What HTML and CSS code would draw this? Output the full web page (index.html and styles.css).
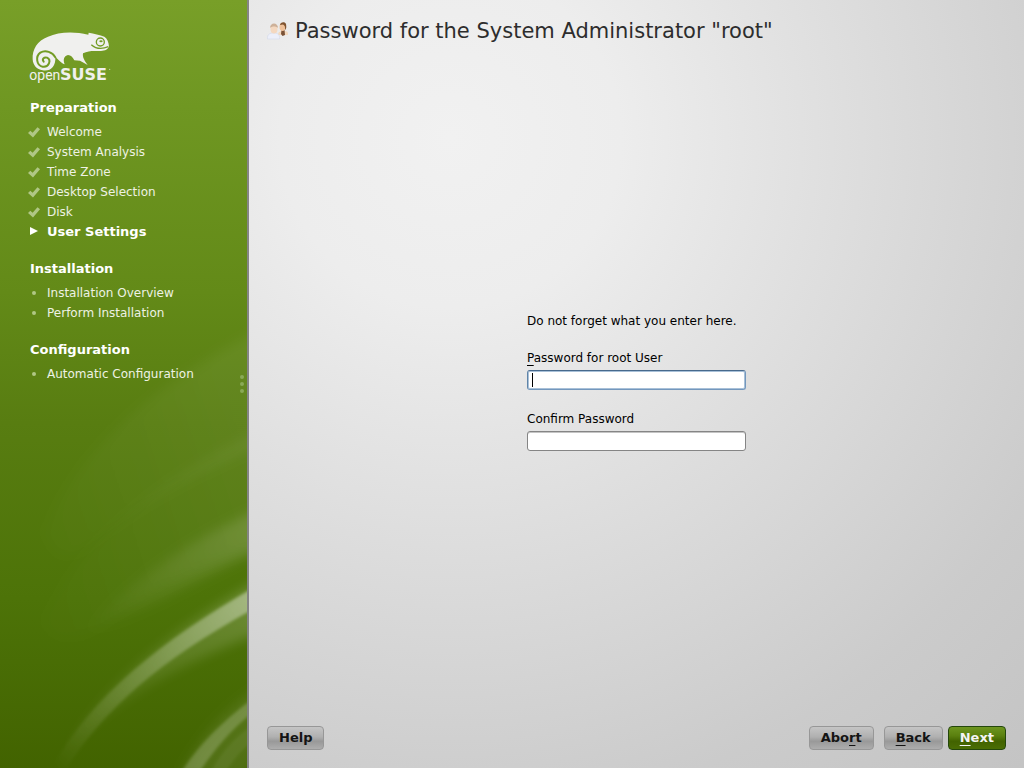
FILE: index.html
```html
<!DOCTYPE html>
<html lang="en">
<head>
    <meta charset="UTF-8">
    <meta name="viewport" content="width=device-width, initial-scale=1.0">
    <title>openSUSE Installation</title>
    <link rel="stylesheet" href="styles.css">
</head>
<body>
    <svg class="defs" aria-hidden="true">
        <symbol id="check" viewBox="0 0 12 12">
            <path d="M0 7 L2.300 4.800 L4.600 6.800 L9.500 1.200 L12 3.200 L5 11.500 Z"/>
        </symbol>
    </svg>
    <aside class="sidebar">
        <!-- Light streaks -->
        <svg class="streaks" viewBox="0 -300 741 1404" preserveAspectRatio="xMaxYMax slice" aria-hidden="true">
            <defs>
                <linearGradient id="fade" gradientUnits="userSpaceOnUse" x1="160" y1="1090" x2="741" y2="590">
                    <stop offset="0" stop-color="#fff" stop-opacity="0"/>
                    <stop offset="0.5" stop-color="#fff" stop-opacity="0.18"/>
                    <stop offset="1" stop-color="#fff" stop-opacity="0.38"/>
                </linearGradient>
                <linearGradient id="haze" gradientUnits="userSpaceOnUse" x1="120" y1="400" x2="741" y2="200">
                    <stop offset="0" stop-color="#fff" stop-opacity="0.01"/>
                    <stop offset="1" stop-color="#fff" stop-opacity="0.05"/>
                </linearGradient>
                <linearGradient id="band" gradientUnits="userSpaceOnUse" x1="230" y1="680" x2="741" y2="380">
                    <stop offset="0" stop-color="#fff" stop-opacity="0"/>
                    <stop offset="1" stop-color="#fff" stop-opacity="0.13"/>
                </linearGradient>
                <filter id="soft" x="-20%" y="-20%" width="140%" height="140%"><feGaussianBlur stdDeviation="5"/></filter>
                <filter id="softer" x="-20%" y="-20%" width="140%" height="140%"><feGaussianBlur stdDeviation="18"/></filter>
            </defs>
            <path fill="url(#haze)" filter="url(#softer)" d="M800 -220 C480 -60 230 150 130 400 C170 480 190 480 250 450 C400 330 560 230 800 130 Z"/>
            <path fill="url(#haze)" filter="url(#softer)" d="M800 80 C500 220 220 440 130 660 C150 720 200 740 300 680 C420 590 600 500 800 430 Z"/>
            <path fill="url(#band)" filter="url(#softer)" d="M800 320 C580 410 380 550 250 700 C400 660 600 530 800 440 Z"/>
            <path fill="url(#fade)" filter="url(#softer)" opacity="0.45" d="M800 530 C500 690 280 880 150 1110 C350 890 520 800 800 690 Z"/>
            <path fill="url(#fade)" filter="url(#soft)" d="M780 552 C500 710 280 880 155 1104 L200 1104 C320 920 480 780 780 616 Z"/>
            <path fill="#fff" fill-opacity="0.08" filter="url(#softer)" d="M800 850 C680 920 600 1010 540 1130 L740 1130 L800 1000 Z"/>
            <path fill="#fff" fill-opacity="0.19" filter="url(#soft)" d="M780 880 C670 960 600 1030 548 1110 L602 1110 C650 1040 700 980 780 920 Z"/>
            <path fill="#fff" fill-opacity="0.06" filter="url(#soft)" d="M780 965 C710 1000 670 1050 635 1110 L680 1110 C710 1070 730 1040 780 1010 Z"/>
        </svg>

        <svg class="logo" viewBox="27 33 246 162" role="img" aria-label="openSUSE">
            <path fill="#f0f0ee" d="M38 118 C36 88 52 62 84 50 C115 36 160 33 205 44 L206 38 C222 40 240 45 253 50 C261 55 266 66 267 79 C264 88 254 94 240 93 C222 93 205 91 189 100 C187 111 193 122 203 135 L180 122 L163 121 C158 112 153 105 144 105 C133 107 128 118 134 133 C121 129 114 116 106 111 C108 140 91 155 68 151 C50 148 39 136 38 118 Z"/>
            <path fill="none" stroke="#739c24" stroke-width="6" stroke-linecap="round" d="M106 112 C98 96 76 89 61 98 C46 109 49 136 68 140 C87 143 95 120 81 113 C72 110 65 118 71 125"/>
            <circle cx="241" cy="66" r="12" fill="none" stroke="#739c24" stroke-width="4"/>
            <ellipse cx="243" cy="64" rx="5" ry="3" fill="#739c24"/>
            <path fill="none" stroke="#739c24" stroke-width="4" d="M214 74 C226 85 244 89 265 80"/>
            <text class="logo-open" x="28" y="181">open</text>
            <text class="logo-suse" x="120" y="181">SUSE</text>
            <circle cx="269" cy="148" r="2" fill="#c9d8a8"/>
        </svg>

        <nav class="steps">
            <h2>Preparation</h2>
            <ul>
                <li><svg class="mark"><use href="#check"/></svg>Welcome</li>
                <li><svg class="mark"><use href="#check"/></svg>System Analysis</li>
                <li><svg class="mark"><use href="#check"/></svg>Time Zone</li>
                <li><svg class="mark"><use href="#check"/></svg>Desktop Selection</li>
                <li><svg class="mark"><use href="#check"/></svg>Disk</li>
                <li class="current"><svg class="mark" viewBox="0 0 12 12"><path d="M2 1 L10 5 L2 9 Z"/></svg>User Settings</li>
            </ul>
            <h2>Installation</h2>
            <ul>
                <li><svg class="mark" viewBox="0 0 12 12"><circle cx="6" cy="6" r="2"/></svg>Installation Overview</li>
                <li><svg class="mark" viewBox="0 0 12 12"><circle cx="6" cy="6" r="2"/></svg>Perform Installation</li>
            </ul>
            <h2>Configuration</h2>
            <ul>
                <li><svg class="mark" viewBox="0 0 12 12"><circle cx="6" cy="6" r="2"/></svg>Automatic Configuration</li>
            </ul>
        </nav>
        <div class="grip"><i></i><i></i><i></i></div>
    </aside>

    <form class="main">
        <header class="title">
            <svg class="users" viewBox="0 0 22 20" aria-hidden="true">
                <path fill="#f3d9bf" d="M11 13 C12 9 20 9 21 12 V14 H11 Z"/>
                <path fill="#7a5236" d="M14.500 9 L17.500 9 L18 14 L15.500 15 L14 13 Z"/>
                <ellipse cx="15.500" cy="6" rx="3" ry="4" fill="#efc199"/>
                <path fill="#80542f" d="M13 4 C13 1 18 0 19 3 C19.500 6 19.500 8 18 9 C18.500 6 17.500 4 16 3.500 Z"/>
                <path fill="#eceffa" stroke="#d3d9e9" stroke-width="0.600" d="M0.500 18 C0 13 3 12 7 12 C11 12 13 14 12.500 18 Z"/>
                <ellipse cx="7" cy="8" rx="3.500" ry="4.500" fill="#f4d8c0"/>
                <path fill="#cdb199" d="M3 7 C3 1 11 1 11 7 C9 5 5 5 3 7 Z"/>
            </svg>
            <h1>Password for the System Administrator "root"</h1>
        </header>

        <div class="content">
            <div class="fields">
                <p>Do not forget what you enter here.</p>
                <label for="password"><u>P</u>assword for root User</label>
                <input type="password" id="password" class="active">
                <label for="confirm">Confirm Password</label>
                <input type="password" id="confirm">
            </div>
        </div>

        <footer class="buttons">
            <button type="button">Help</button>
            <button type="button" class="abort">Abo<u>r</u>t</button>
            <button type="button" class="back"><u>B</u>ack</button>
            <button type="submit" class="next"><u>N</u>ext</button>
        </footer>
    </form>
</body>
</html>
```

FILE: styles.css
```css
* {
    box-sizing: border-box;
}
body {
    margin: 0;
    min-height: 100vh;
    display: flex;
    font-family: "DejaVu Sans", Verdana, sans-serif;
    font-size: 12px;
    line-height: 20px;
    color: #000;
}
.defs {
    position: absolute;
    width: 0;
    height: 0;
}

/* Sidebar */
.sidebar {
    position: relative;
    flex: none;
    width: 249px;
    padding: 31px 0 0 29px;
    border-right: 2px solid #858585;
    background: linear-gradient(#789f28, #6f9722 14%, #638a18 38%, #587d11 55%, #4d7308 78%, #426300);
    color: #eef2e4;
}
.streaks {
    position: absolute;
    right: 0;
    bottom: 0;
    width: 247px;
    height: 468px;
}
.logo {
    position: relative;
    display: block;
    width: 82px;
    height: 54px;
}
.logo-open, .logo-suse {
    fill: #f0f0ee;
}
.logo-open {
    font-family: Roboto, sans-serif;
    font-size: 42px;
}
.logo-suse {
    font-family: "DejaVu Sans", sans-serif;
    font-size: 48px;
    font-weight: bold;
}
.steps {
    position: relative;
    padding-top: 13px;
}
.steps h2 {
    margin: 0 0 4px 1px;
    font-size: 13px;
    line-height: 20px;
    color: #fff;
}
.steps ul {
    margin: 0 0 17px;
    padding: 0;
    list-style: none;
}
.steps li {
    display: flex;
    align-items: center;
    gap: 7px;
}
.mark {
    width: 12px;
    height: 12px;
    margin-left: -1px;
    fill: #b0c785;
}
.current {
    font-size: 13px;
    font-weight: bold;
    color: #fff;
}
.current .mark {
    fill: #fff;
}
.grip {
    position: absolute;
    right: 3px;
    top: 50%;
    display: grid;
    gap: 3px;
    transform: translateY(-50%);
}
.grip i {
    width: 4px;
    height: 4px;
    border-radius: 50%;
    background: #8aa957;
}

/* Main area */
.main {
    flex: 1;
    display: flex;
    flex-direction: column;
    padding: 18px;
    background: radial-gradient(ellipse 110% 110% at 26% 18%, #f1f1f1, #ededed 20%, #dcdcdc 50%, #cbcbcb 80%, #c4c4c4);
}
.title {
    display: flex;
    align-items: center;
    gap: 6px;
}
.title h1 {
    margin: 0;
    font-size: 21px;
    font-weight: normal;
    line-height: 26px;
    color: #2d2d2d;
}
.users {
    width: 22px;
    height: 20px;
}
.content {
    flex: 1;
    display: flex;
    align-items: center;
    justify-content: center;
    padding-bottom: 8px;
}
.fields {
    display: flex;
    flex-direction: column;
    min-width: 219px;
}
.fields p {
    margin: 0 0 17px;
}
.fields input {
    width: 100%;
    height: 20px;
    margin: 2px 0 19px;
    padding: 0 4px;
    border: 1px solid #858585;
    border-radius: 3px;
    background: #fff;
    box-shadow: inset 0 1px #c4c4c4;
    font: inherit;
    outline: none;
}
.fields input:last-child {
    margin-bottom: 0;
}
.fields input.active {
    border-color: #47698c #7397bd #7397bd #5f84a8;
    background: linear-gradient(#000, #000) 4px 2px / 1px 14px no-repeat #fff;
    box-shadow: inset 0 0 0 1px #a8c0d8;
}
u {
    text-underline-offset: 3px;
    text-decoration-thickness: 1px;
    text-decoration-skip-ink: none;
}

/* Buttons */
.buttons {
    display: flex;
}
.buttons button {
    height: 24px;
    padding: 0 11px 2px;
    border: 1px solid #979797;
    border-radius: 4px;
    background: linear-gradient(#c5c5c5, #b0b0b0 45%, #999 65%, #adadad);
    font: bold 13px "DejaVu Sans", sans-serif;
    color: #141414;
}
.buttons .abort {
    margin-left: auto;
    margin-right: 10px;
}
.buttons .back {
    margin-right: 5px;
}
.buttons .next {
    border-color: #24470c;
    background: linear-gradient(#6d951f, #5a800f 40%, #426300 65%, #4a6d04);
    color: #f4f4f4;
}
```
